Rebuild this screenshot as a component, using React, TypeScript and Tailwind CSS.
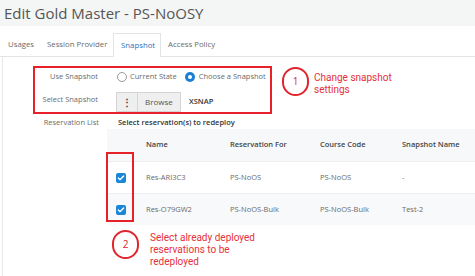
import { Check } from "lucide-react";

const rows = [
  { name: "Res-ARI3C3", resFor: "PS-NoOS", course: "PS-NoOS", snap: "-", shade: false },
  { name: "Res-O79GW2", resFor: "PS-NoOS-Bulk", course: "PS-NoOS-Bulk", snap: "Test-2", shade: true },
];

const tabs = [
  { label: "Usages", w: "w-[39px]" },
  { label: "Session Provider", w: "w-[73px]" },
  { label: "Snapshot", w: "w-[48px]", active: true },
  { label: "Access Policy", w: "" },
];

const Radio = ({ checked }: { checked?: boolean }) =>
  checked ? (
    <span className="flex h-[10px] w-[10px] shrink-0 items-center justify-center rounded-full bg-[#1a7fd6]">
      <span className="h-[4px] w-[4px] rounded-full bg-white" />
    </span>
  ) : (
    <span className="h-[10px] w-[10px] shrink-0 rounded-full border border-[#9a9a9a] bg-white" />
  );

const Box = () => (
  <span className="flex h-[10px] w-[10px] items-center justify-center rounded-[2px] bg-[#1a86d8]">
    <Check className="h-[8px] w-[8px] text-white" strokeWidth={4} />
  </span>
);

const Badge = ({ n }: { n: number }) => (
  <span className="flex h-[29px] w-[27px] shrink-0 items-center justify-center rounded-full border-2 border-[#e0252f] text-[10px] text-[#e0252f]">
    {n}
  </span>
);

export default function App() {
  return (
    <div className="h-[276px] w-[475px] overflow-hidden whitespace-nowrap bg-white font-['Open_Sans',sans-serif] text-[7.5px] text-[#6b6b6b]">
      {/* Title */}
      <div className="h-[26px] bg-[#f4f5f5] pl-[4px] text-[15px] leading-[26px] text-[#555]">
        Edit Gold Master - PS-NoOSY
      </div>

      {/* Tabs */}
      <div className="mt-[7px] flex h-[24px] border-b border-[#e2e5e7] pl-[1px] text-[7.8px]">
        {tabs.map((t) => (
          <div
            key={t.label}
            className={
              t.active
                ? `${t.w} -mb-px flex items-center border border-b-0 border-[#e2e5e7] bg-white pl-[7px] text-[#2f6fba]`
                : `${t.w} flex items-center pl-[7px] text-[#6b6b6b]`
            }
          >
            {t.label}
          </div>
        ))}
      </div>

      {/* Body */}
      <div className="relative ml-[2px] h-[219px] border-l border-[#e8e8e8]">
        <div className="flex pt-[9px]">
          {/* Red box 1 */}
          <div className="ml-[30px] h-[48px] w-[239px] overflow-hidden border-2 border-[#e8202a]">
            <div className="flex h-[18px] items-center">
              <div className="w-[63px] shrink-0 text-right">Use Snapshot</div>
              <div className="ml-[19px] flex items-center">
                <Radio />
                <span className="ml-[3px]">Current State</span>
                <span className="ml-[8px]" />
                <Radio checked />
                <span className="ml-[4px]">Choose a Snapshot</span>
              </div>
            </div>
            <div className="mt-[6px] flex h-[20px]">
              <div className="w-[63px] shrink-0 pt-[2px] text-right">Select Snapshot</div>
              <div className="ml-[18px] flex h-[20px] border border-[#d4d4d4] bg-[#efefef]">
                <div className="flex w-[21px] items-center justify-center border-r border-[#d4d4d4] text-[10px] font-bold text-[#444]">
                  ⋮
                </div>
                <div className="flex w-[42px] items-center justify-center text-[8px] text-[#555]">Browse</div>
              </div>
              <div className="ml-[8px] flex items-center font-semibold text-[#333]">XSNAP</div>
            </div>
          </div>

          {/* Note 1 */}
          <div className="ml-[10px] mt-[1px] flex h-[30px] items-start">
            <Badge n={1} />
            <div className="ml-[5px] mt-[5px] font-['Roboto',sans-serif] text-[10px] leading-[12px] text-[#e5303a]">
              Change snapshot
              <br />
              settings
            </div>
          </div>
        </div>

        {/* Reservation list */}
        <div className="mt-[2px] flex h-[13px] items-center">
          <div className="ml-[33px] w-[63px] shrink-0 text-right">Reservation List</div>
          <div className="ml-[19px] font-semibold text-[#333]">Select reservation(s) to redeploy</div>
        </div>

        <div className="relative ml-[104px]">
          <div className="flex h-[32px] items-center bg-[#f7f8fa] font-semibold text-[#444]">
            <div className="w-[30px]" />
            <div className="w-[84px] pl-[9px]">Name</div>
            <div className="w-[90px] pl-[9px]">Reservation For</div>
            <div className="w-[82px] pl-[9px]">Course Code</div>
            <div className="flex-1 pl-[9px]">Snapshot Name</div>
          </div>
          {rows.map((r) => (
            <div
              key={r.name}
              className={`flex h-[32px] items-center border-t border-[#eceef0] ${r.shade ? "bg-[#f8f9fa]" : "bg-white"}`}
            >
              <div className="w-[30px] pl-[9px]">
                <Box />
              </div>
              <div className="w-[84px] pl-[9px]">{r.name}</div>
              <div className="w-[90px] pl-[9px]">{r.resFor}</div>
              <div className="w-[82px] pl-[9px]">{r.course}</div>
              <div className="flex-1 pl-[9px]">{r.snap}</div>
            </div>
          ))}

          {/* Red box 2 */}
          <div className="absolute left-[-1px] top-[23px] h-[70px] w-[28px] border-2 border-[#e8202a]" />
        </div>

        {/* Note 2 */}
        <div className="ml-[109px] mt-[5px] flex items-start">
          <Badge n={2} />
          <div className="ml-[11px] mt-[2px] font-['Roboto',sans-serif] text-[10px] leading-[12px] text-[#e5303a]">
            Select already deployed
            <br />
            reservations to be
            <br />
            redeployed
          </div>
        </div>
      </div>
    </div>
  );
}
